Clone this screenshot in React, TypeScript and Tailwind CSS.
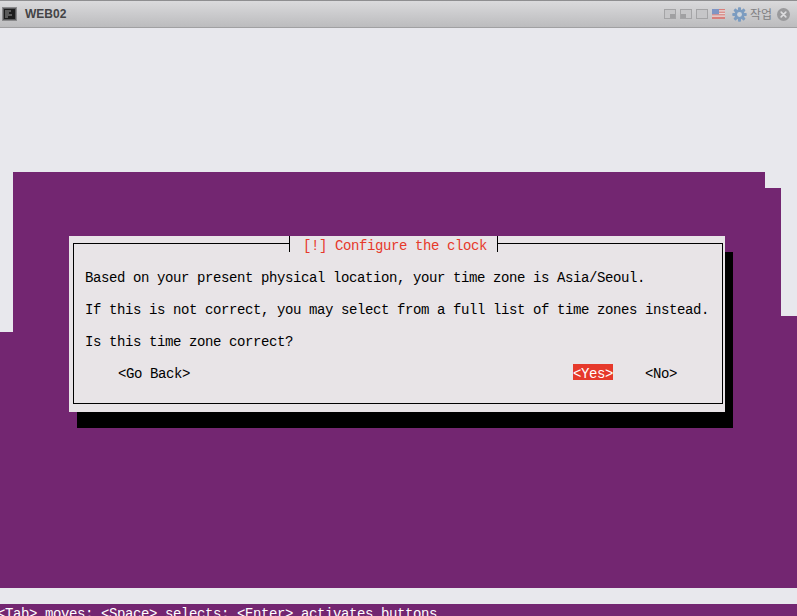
import React from "react";

const mono = "font-['Liberation_Mono',monospace] text-[14px] leading-4 tracking-[-0.4px]";
// terminal cell: 16px tall, text sits low in it
const cell = "h-4 pt-[2px]";

const WindowIcon = ({ corner }: { corner?: "br" | "bl" }) => (
  <svg width="12" height="10" viewBox="0 0 12 10">
    <rect x="0.5" y="0.5" width="11" height="9" fill="#c6c6c8" stroke="#a4a4a6" />
    {corner === "br" && <rect x="6" y="5" width="5" height="4" fill="#a0a0a2" />}
    {corner === "bl" && <rect x="1" y="5" width="5" height="4" fill="#a0a0a2" />}
  </svg>
);

const Flag = () => (
  <svg width="13" height="10" viewBox="0 0 13 10">
    <rect width="13" height="10" fill="#e6d8d8" />
    <rect y="0" width="13" height="1.2" fill="#d8807c" />
    <rect y="2.6" width="13" height="1.2" fill="#d8807c" />
    <rect y="5.2" width="13" height="1.2" fill="#d8807c" />
    <rect y="7.8" width="13" height="2.2" fill="#d8807c" />
    <rect width="7" height="5.2" fill="#7f95c4" />
  </svg>
);

const Gear = () => (
  <svg width="15" height="15" viewBox="0 0 16 16">
    <g fill="#7c9cc0">
      <circle cx="8" cy="8" r="5.4" />
      <rect x="6.4" y="0.3" width="3.2" height="15.4" rx="0.8" />
      <rect x="6.4" y="0.3" width="3.2" height="15.4" rx="0.8" transform="rotate(45 8 8)" />
      <rect x="6.4" y="0.3" width="3.2" height="15.4" rx="0.8" transform="rotate(90 8 8)" />
      <rect x="6.4" y="0.3" width="3.2" height="15.4" rx="0.8" transform="rotate(135 8 8)" />
    </g>
    <circle cx="8" cy="8" r="2.6" fill="#cdd3d9" />
  </svg>
);

const CloseCircle = () => (
  <svg width="13" height="13" viewBox="0 0 14 14">
    <circle cx="7" cy="7" r="7" fill="#9a9a9c" />
    <path d="M4.5 4.5l5 5M9.5 4.5l-5 5" stroke="#dcdcde" strokeWidth="1.8" strokeLinecap="round" />
  </svg>
);

const ConsoleIcon = () => (
  <svg width="15" height="14" viewBox="0 0 15 14">
    <rect x="0.5" y="0.5" width="14" height="13" fill="#1c1c1c" stroke="#8a8a8c" />
    <rect x="1.5" y="1.5" width="12" height="11" fill="none" stroke="#5a5a5c" />
    <path d="M3 4h6M3 6h4M3 8h7M3 10h3" stroke="#9a9a9a" strokeWidth="1" />
  </svg>
);

const App = () => {
  return (
    <div className="w-[797px] h-[616px] overflow-hidden relative bg-[#e8e8ed]">
      {/* window title bar */}
      <div className="h-[28px] flex items-center border-t border-b border-t-[#8e8e90] border-b-[#a0a0a2] bg-gradient-to-b from-[#dadadc] to-[#bcbcbe]">
        <div className="ml-[2px]">
          <ConsoleIcon />
        </div>
        <span className="ml-[8px] font-['Liberation_Sans',sans-serif] text-[12px] font-bold text-[#444446]">WEB02</span>
        <div className="ml-auto flex items-center">
          <div className="flex items-center gap-[4px]">
            <WindowIcon corner="br" />
            <WindowIcon corner="bl" />
            <WindowIcon />
          </div>
          <div className="ml-[4px]">
            <Flag />
          </div>
          <div className="ml-[7px]">
            <Gear />
          </div>
          <span className="ml-[3px] font-['Noto_Sans_CJK_KR',sans-serif] text-[12px] text-[#808082]">작업</span>
          <div className="ml-[5px] mr-[7px]">
            <CloseCircle />
          </div>
        </div>
      </div>

      {/* installer screen: the purple backdrop is made of stepped bands */}
      <div className="mt-[144px] flex flex-col">
        <div className="h-4 ml-[13px] w-[752px] bg-[#732671]" />
        <div className="h-[128px] ml-[13px] w-[768px] bg-[#732671]" />
        <div className="h-4 ml-[13px] bg-[#732671]" />
        <div className="h-[256px] bg-[#732671]" />
        <div className="h-4" />
        <div className={`bg-[#732671] text-white whitespace-pre -indent-[3px] ${cell} ${mono}`}>
          {"<Tab> moves; <Space> selects; <Enter> activates buttons"}
        </div>
      </div>

      {/* dialog */}
      <div className={`absolute left-[69px] top-[236px] w-[656px] h-[176px] bg-[#e8e4e7] shadow-[8px_16px_0_#000] text-black ${mono}`}>
        <div className="ml-[4px] mt-[7px] w-[650px] h-[161px] border border-black pt-[24px] pl-[11px] flex flex-col gap-4 whitespace-pre">
          <div className={cell}>Based on your present physical location, your time zone is Asia/Seoul.</div>
          <div className={cell}>If this is not correct, you may select from a full list of time zones instead.</div>
          <div className={cell}>Is this time zone correct?</div>
          <div className="flex">
            <span className={`ml-[33px] ${cell}`}>{"<Go Back>"}</span>
            <span className={`ml-[383px] w-10 bg-[#e6392b] text-white ${cell}`}>{"<Yes>"}</span>
            <span className={`ml-[32px] ${cell}`}>{"<No>"}</span>
          </div>
        </div>
        <div className={`absolute left-[220px] top-0 w-[209px] bg-[#e8e4e7] border-x border-black pl-[13px] text-[#e6392b] whitespace-pre ${cell}`}>
          [!] Configure the clock
        </div>
      </div>
    </div>
  );
};

export default App;
